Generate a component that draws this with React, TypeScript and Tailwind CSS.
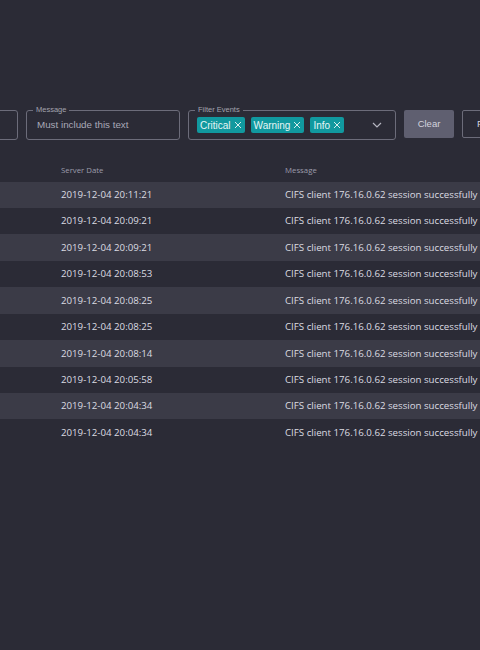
import React from "react";

const rows = [
  "2019-12-04 20:11:21",
  "2019-12-04 20:09:21",
  "2019-12-04 20:09:21",
  "2019-12-04 20:08:53",
  "2019-12-04 20:08:25",
  "2019-12-04 20:08:25",
  "2019-12-04 20:08:14",
  "2019-12-04 20:05:58",
  "2019-12-04 20:04:34",
  "2019-12-04 20:04:34",
];

const tags = ["Critical", "Warning", "Info"];

function Outlined({
  label,
  className,
  children,
}: {
  label?: string;
  className: string;
  children?: React.ReactNode;
}) {
  return (
    <div className={`relative shrink-0 h-[30px] rounded-[3px] border border-[#6c6c7a] flex items-center ${className}`}>
      {label && (
        <span className="absolute -top-[6px] left-[6px] px-[3px] bg-[#2b2b36] text-[7.5px] leading-[10px] text-[#a3a3ae]">
          {label}
        </span>
      )}
      {children}
    </div>
  );
}

export default function App() {
  return (
    <div
      className="w-[480px] h-[650px] overflow-hidden bg-[#2b2b36] text-[#d9d9e0]"
      style={{ fontFamily: '"Liberation Sans", Arial, sans-serif' }}
    >
      {/* filter bar */}
      <div className="flex items-start gap-2 pt-[110px] ml-[-102px]">
        <Outlined className="w-[120px]" />
        <Outlined label="Message" className="w-[154px] pl-[10px]">
          <span className="text-[9.8px] text-[#a9a9b8]">Must include this text</span>
        </Outlined>
        <Outlined label="Filter Events" className="w-[208px] pl-[8px] pr-[13px]">
          <div className="flex items-center gap-[6px]">
            {tags.map((t) => (
              <span
                key={t}
                className="flex items-center gap-[3px] h-[16px] px-[3px] rounded-[2px] bg-[#11999f] text-[10px] text-[#e6f6f6]"
              >
                {t}
                <svg width="8" height="8" viewBox="0 0 8 8" className="stroke-[#d6eeee]" strokeWidth="1">
                  <path d="M1 1L7 7M7 1L1 7" />
                </svg>
              </span>
            ))}
          </div>
          <svg width="10" height="6" viewBox="0 0 10 6" className="ml-auto" fill="none" stroke="#b5b5c0" strokeWidth="1.2">
            <path d="M1 1l4 4 4-4" />
          </svg>
        </Outlined>
        <button className="shrink-0 w-[50px] h-[28px] rounded-[2px] bg-[#5f5f70] text-[9.5px] text-[#d3d3de]">
          Clear
        </button>
        <button className="shrink-0 w-[60px] h-[28px] rounded-[2px] border border-[#6c6c7a] text-[9.5px] text-[#d3d3de] text-left pl-[14px]">
          Filter
        </button>
      </div>

      {/* table */}
      <div className="mt-[20px]" style={{ fontFamily: '"Open Sans", "Noto Sans", sans-serif' }}>
        <div className="flex items-center h-[21.5px] text-[7.8px] text-[#9c9cab]">
          <div className="w-[285px] pl-[61px]">Server Date</div>
          <div>Message</div>
        </div>
        {rows.map((d, i) => (
          <div
            key={i}
            className={`flex items-center h-[26.45px] pt-[1px] whitespace-nowrap text-[9.7px] text-[#dcdce2] ${
              i % 2 === 0 ? "bg-[#3b3b47]" : "bg-[#2b2b36]"
            }`}
          >
            <div className="w-[285px] shrink-0 pl-[61px]">{d}</div>
            <div>CIFS client 176.16.0.62 session successfully</div>
          </div>
        ))}
      </div>
    </div>
  );
}
